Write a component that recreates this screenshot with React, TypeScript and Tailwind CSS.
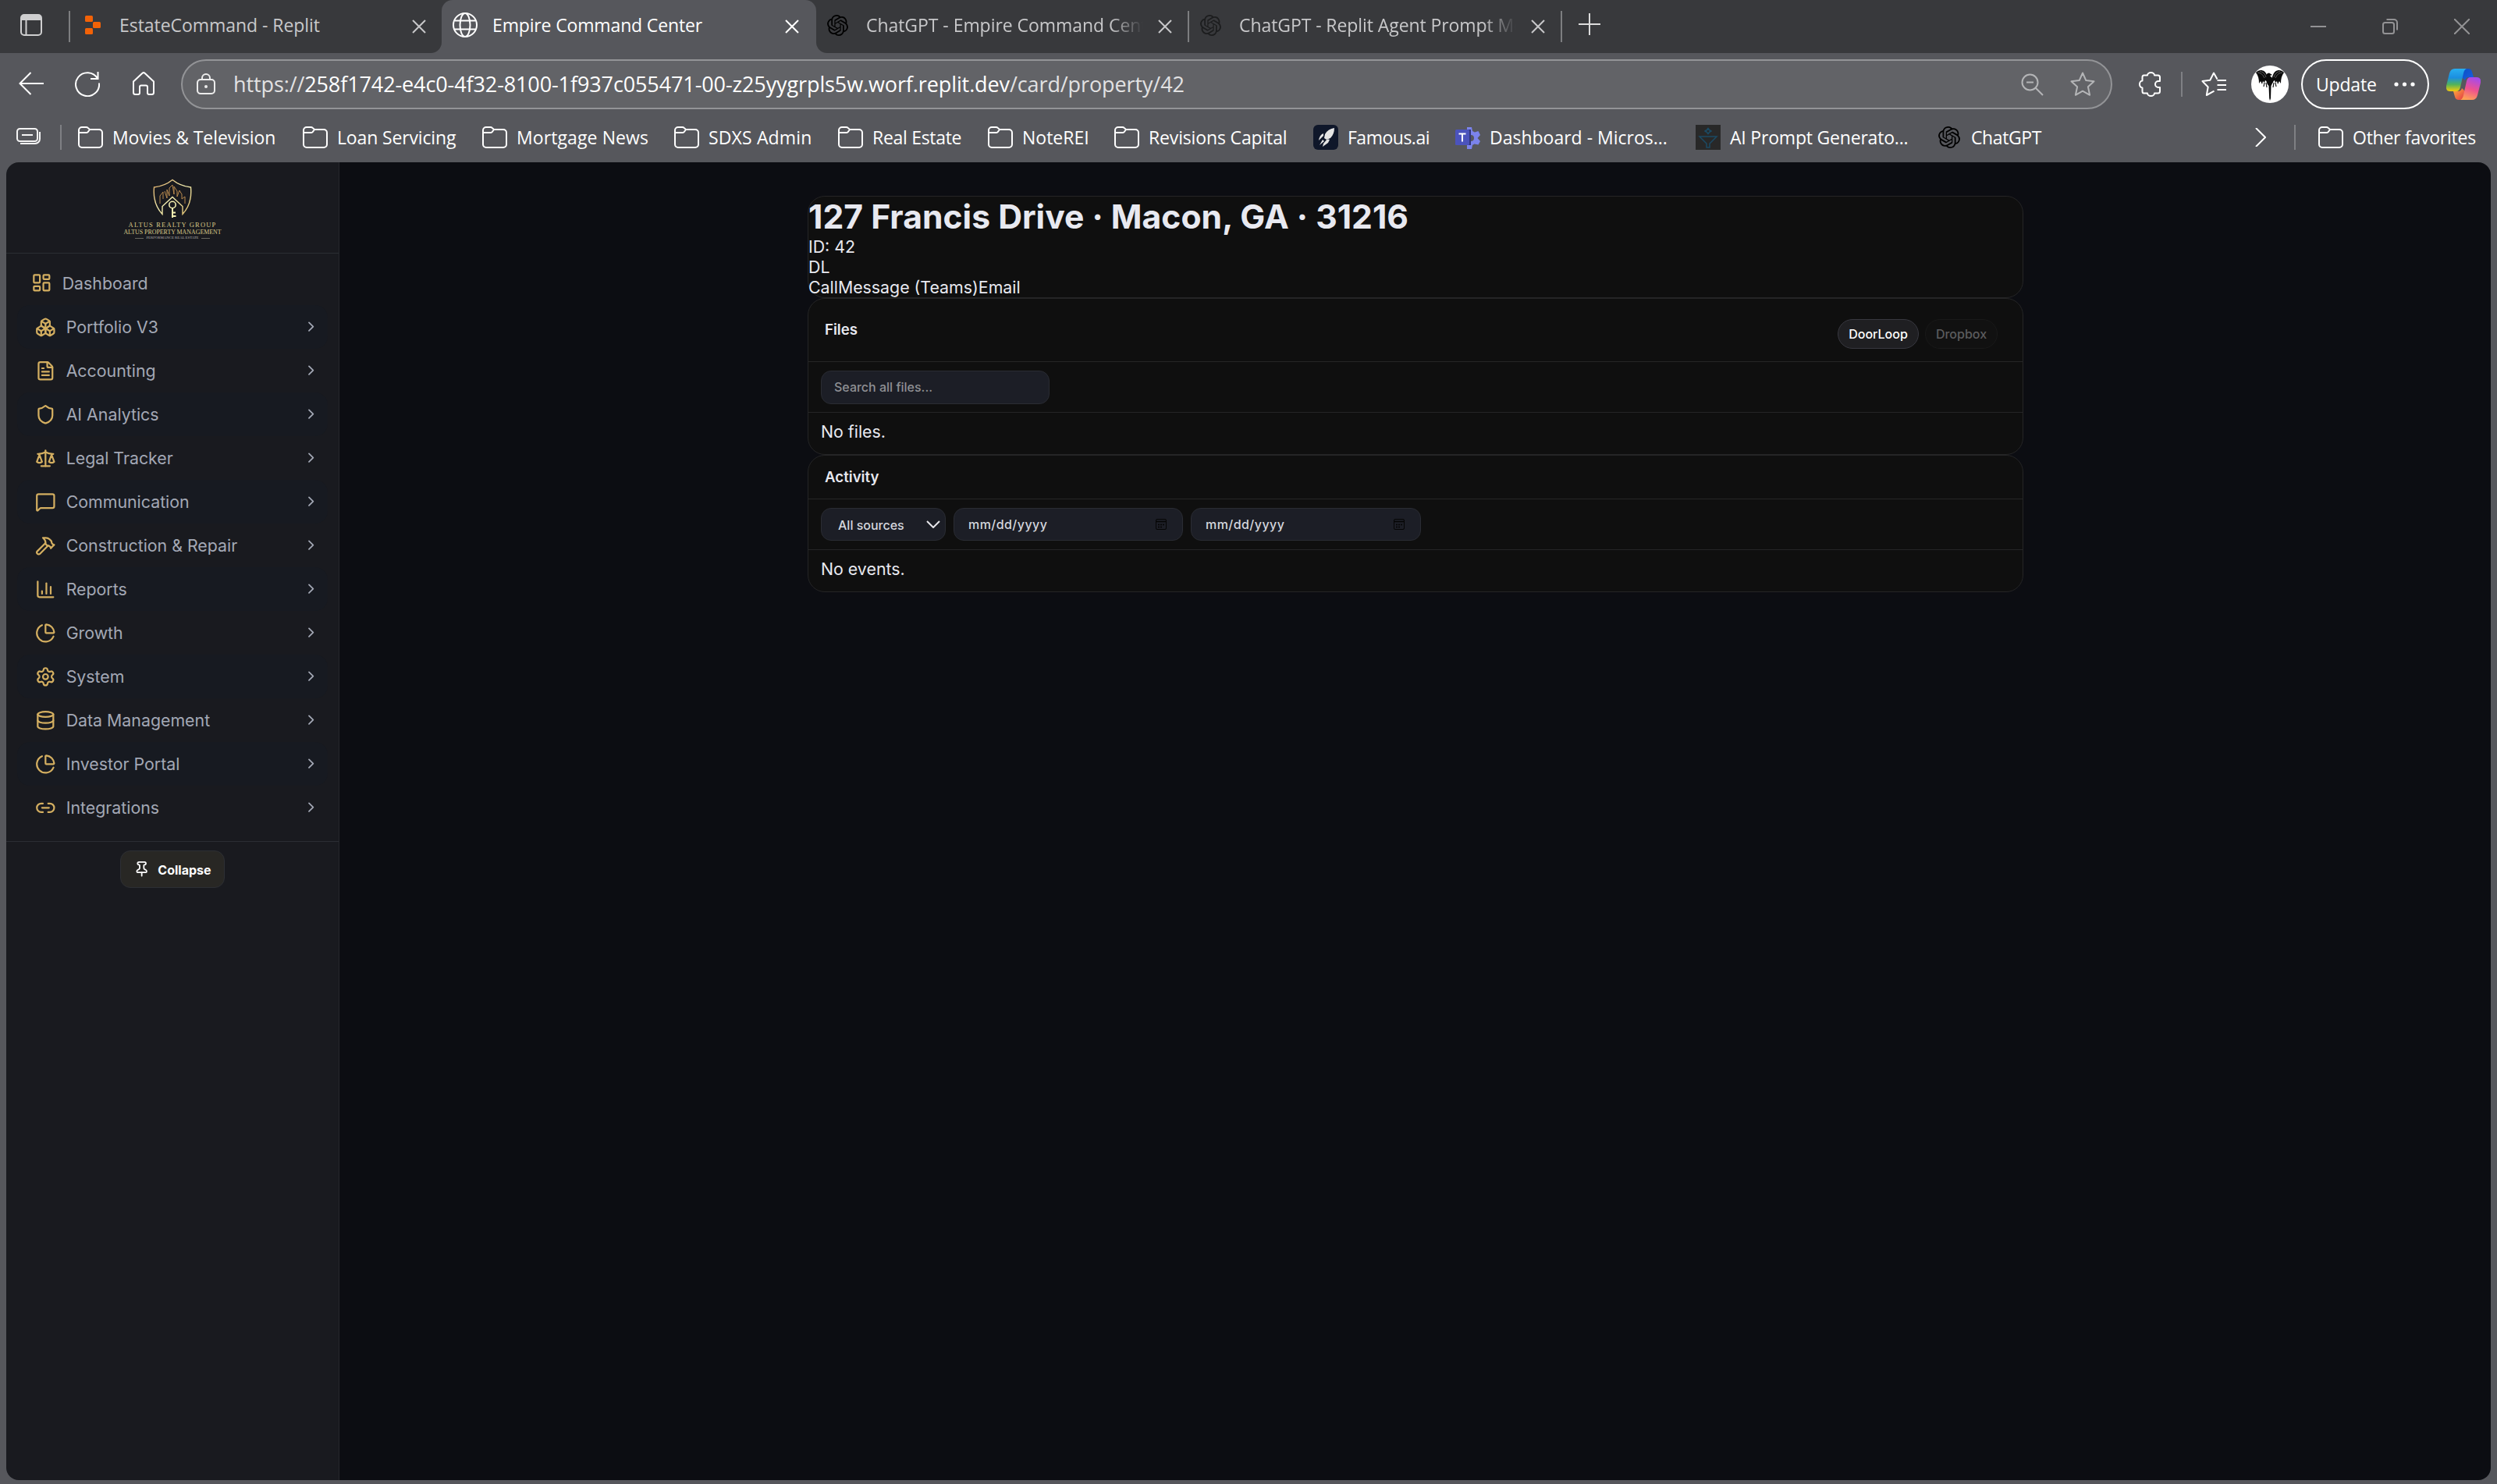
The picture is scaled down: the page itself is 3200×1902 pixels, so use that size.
import type { ReactNode } from "react";
import {
  Boxes,
  ChartColumn,
  ChartPie,
  ChevronRight,
  Database,
  FileText,
  Hammer,
  LayoutDashboard,
  Link2,
  MessageSquare,
  Pin,
  Scale,
  Settings,
  Shield,
} from "lucide-react";

const OPENAI =
  "M22.2819 9.8211a5.9847 5.9847 0 0 0-.5157-4.9108 6.0462 6.0462 0 0 0-6.5098-2.9A6.0651 6.0651 0 0 0 4.9807 4.1818a5.9847 5.9847 0 0 0-3.9977 2.9 6.0462 6.0462 0 0 0 .7427 7.0966 5.98 5.98 0 0 0 .511 4.9107 6.051 6.051 0 0 0 6.5146 2.9001A5.9847 5.9847 0 0 0 13.2599 24a6.0557 6.0557 0 0 0 5.7718-4.2058 5.9894 5.9894 0 0 0 3.9977-2.9001 6.0557 6.0557 0 0 0-.7475-7.0729zm-9.022 12.6081a4.4755 4.4755 0 0 1-2.8764-1.0408l.1419-.0804 4.7783-2.7582a.7948.7948 0 0 0 .3927-.6813v-6.7369l2.02 1.1686a.071.071 0 0 1 .038.052v5.5826a4.504 4.504 0 0 1-4.4945 4.4944zm-9.6607-4.1254a4.4708 4.4708 0 0 1-.5346-3.0137l.142.0852 4.783 2.7582a.7712.7712 0 0 0 .7806 0l5.8428-3.3685v2.3324a.0804.0804 0 0 1-.0332.0615L9.74 19.9502a4.4992 4.4992 0 0 1-6.1408-1.6464zM2.3408 7.8956a4.485 4.485 0 0 1 2.3655-1.9728V11.6a.7664.7664 0 0 0 .3879.6765l5.8144 3.3543-2.0201 1.1685a.0757.0757 0 0 1-.071 0l-4.8303-2.7865A4.504 4.504 0 0 1 2.3408 7.872zm16.5963 3.8558L13.1038 8.364 15.1192 7.2a.0757.0757 0 0 1 .071 0l4.8303 2.7913a4.4944 4.4944 0 0 1-.6765 8.1042v-5.6772a.79.79 0 0 0-.407-.667zm2.0107-3.0231l-.142-.0852-4.7735-2.7818a.7759.7759 0 0 0-.7854 0L9.409 9.2297V6.8974a.0662.0662 0 0 1 .0284-.0615l4.8303-2.7866a4.4992 4.4992 0 0 1 6.6802 4.66zM8.3065 12.863l-2.02-1.1638a.0804.0804 0 0 1-.038-.0567V6.0742a4.4992 4.4992 0 0 1 7.3757-3.4537l-.142.0805L8.704 5.459a.7948.7948 0 0 0-.3927.6813zm1.0976-2.3654l2.602-1.4998 2.6069 1.4998v2.9994l-2.5974 1.4997-2.6067-1.4997Z";

function OpenAiMark({ className }: { className: string }) {
  return (
    <svg viewBox="0 0 24 24" className={className} fill="currentColor">
      <path d={OPENAI} />
    </svg>
  );
}

function FolderIcon() {
  return (
    <svg viewBox="0 0 32 32" className="h-8 w-8 shrink-0" fill="none" stroke="#fff" strokeWidth="2">
      <path d="M1 10V7a4 4 0 0 1 4-4h5.500q1.300 0 2.200.9L15 6h12a4 4 0 0 1 4 4v15a4 4 0 0 1-4 4H5a4 4 0 0 1-4-4V10h9.500q1.300 0 2.200-.9L15 6" />
    </svg>
  );
}

function CloseX() {
  return (
    <svg viewBox="0 0 18 18" className="h-[18px] w-[18px]" fill="none" stroke="currentColor" strokeWidth="2">
      <path d="M1 1l16 16M17 1L1 17" />
    </svg>
  );
}

function TabBar() {
  return (
    <div className="flex h-[68px] bg-[#56575c] text-[#c8c8ca]">
      <div className="flex h-[68px] w-[566px] items-center rounded-br-[14px] bg-[#38393c]">
        <svg viewBox="0 0 28 28" className="-mt-1 ml-[26px] h-7 w-7" fill="none" stroke="#cfcfd0" strokeWidth="2">
          <rect x="1" y="1" width="26" height="26" rx="4" />
          <path d="M1 8V5a4 4 0 0 1 4-4h18a4 4 0 0 1 4 4v3z" fill="#cfcfd0" strokeWidth="0" />
          <path d="M7.500 8v19" />
        </svg>
        <div className="mb-0 ml-[34px] h-10 w-0.5 bg-[#7d7e80]" />
        <svg viewBox="0 0 20 24" className="-mt-1 ml-[19px] h-6 w-5" fill="#f26207">
          <rect x="0" y="0" width="10" height="8" rx="1.500" />
          <rect x="10" y="8" width="10" height="8" rx="1.500" />
          <rect x="0" y="16" width="10" height="8" rx="1.500" />
        </svg>
        <span className="-mt-1 ml-6 w-[375px] text-[23px] tracking-[-0.05px] whitespace-nowrap">
          EstateCommand - Replit
        </span>
        <CloseX />
      </div>
      <div className="w-[480px] bg-[#38393c]">
        <div className="flex h-[68px] items-center rounded-t-[14px] bg-[#56575c] text-white">
          <svg viewBox="0 0 32 32" className="-mt-1 ml-[14px] h-8 w-8" fill="none" stroke="#fff" strokeWidth="2">
            <circle cx="16" cy="16" r="15" />
            <ellipse cx="16" cy="16" rx="6.500" ry="15" />
            <path d="M2.500 10.500h27M2.500 21.500h27" />
          </svg>
          <span className="-mt-1 ml-[19px] w-[375px] text-[23px] tracking-[-0.15px] whitespace-nowrap">
            Empire Command Center
          </span>
          <CloseX />
        </div>
      </div>
      <div className="flex h-[68px] flex-1 items-center rounded-bl-[14px] bg-[#38393c]">
        <OpenAiMark className="-mt-1 ml-[14px] h-[27px] w-[27px] text-black" />
        <span className="-mt-1 mr-[19px] ml-[23px] w-[355px] overflow-hidden text-[23px] tracking-[-0.05px] whitespace-nowrap [mask-image:linear-gradient(to_right,black_88%,transparent)]">
          ChatGPT - Empire Command Center
        </span>
        <CloseX />
        <div className="ml-5 h-10 w-0.5 bg-[#7d7e80]" />
        <OpenAiMark className="-mt-1 ml-[14px] h-[27px] w-[27px] text-[#1c1d1e]" />
        <span className="-mt-1 mr-[19px] ml-[23px] w-[355px] overflow-hidden text-[23px] tracking-[-0.08px] whitespace-nowrap [mask-image:linear-gradient(to_right,black_88%,transparent)]">
          ChatGPT - Replit Agent Prompt Mode
        </span>
        <CloseX />
        <div className="ml-5 h-10 w-0.5 bg-[#7d7e80]" />
        <svg viewBox="0 0 28 28" className="-mt-[6px] ml-[21px] h-7 w-7" fill="none" stroke="#dcdcdc" strokeWidth="2">
          <path d="M14 0v28M0 14h28" />
        </svg>
        <div className="mr-[35px] ml-auto flex gap-[72px] text-[#939395]">
          <svg viewBox="0 0 20 20" className="h-5 w-5" fill="none" stroke="currentColor" strokeWidth="2">
            <path d="M0 10h20" />
          </svg>
          <svg viewBox="0 0 20 20" className="h-5 w-5" fill="none" stroke="currentColor" strokeWidth="2">
            <rect x="1" y="5" width="14" height="14" rx="2.500" />
            <path d="M5.500 1H15a4 4 0 0 1 4 4v9.500" />
          </svg>
          <svg viewBox="0 0 20 20" className="h-5 w-5" fill="none" stroke="currentColor" strokeWidth="2">
            <path d="M0 0l20 20M20 0L0 20" />
          </svg>
        </div>
      </div>
    </div>
  );
}

function Dragon() {
  return (
    <svg viewBox="0 0 48 48" className="ml-8 h-12 w-12 shrink-0">
      <circle cx="24" cy="24" r="24" fill="#fff" />
      <g fill="#0a0a0a">
        <path d="M6 9C10 4 18 5 20 12L22 17 21 21 18 19 17 22 15 20 14 24 12 20 10 23C10 17 9 13 6 9Z" />
        <path d="M42 9C38 4 30 5 28 12L26 17 27 21 30 19 31 22 33 20 34 24 36 20 38 23C38 17 39 13 42 9Z" />
        <path d="M20 15Q18 10 23 9.500L27 12 24 13 26 15Q30 20 27 23L25.500 26 25 42 24 45 23.200 42 22.500 26Q18 22 20 15Z" />
      </g>
      <path
        d="M8 9Q14 9 17 16M11 7.500Q17 8 19 15M40 9Q34 9 31 16M37 7.500Q31 8 29 15"
        stroke="#aaa"
        strokeWidth=".5"
        fill="none"
      />
      <path d="M17 22l-1 5M19 22l1 6M29 22l-1 6M31 22l1 5" stroke="#111" strokeWidth="1.200" />
    </svg>
  );
}

function Copilot() {
  return (
    <svg viewBox="0 0 44 40" className="ml-[22px] h-10 w-11 shrink-0">
      <defs>
        <linearGradient id="cpBlue" x1="0" y1="0" x2="0" y2="1">
          <stop offset="0" stopColor="#28aef0" />
          <stop offset=".4" stopColor="#1b8fe0" />
          <stop offset=".7" stopColor="#52b35a" />
          <stop offset="1" stopColor="#f6cc0b" />
        </linearGradient>
        <linearGradient id="cpPink" x1="0.600" y1="0" x2="0.300" y2="1">
          <stop offset="0" stopColor="#a64bea" />
          <stop offset=".5" stopColor="#ee5190" />
          <stop offset="1" stopColor="#ffa552" />
        </linearGradient>
        <linearGradient id="cpTop" x1="0" y1="0" x2="1" y2="1">
          <stop offset="0" stopColor="#0b4fc4" />
          <stop offset="1" stopColor="#1b5fe0" />
        </linearGradient>
        <linearGradient id="cpBottom" x1="0" y1="0" x2="1" y2="1">
          <stop offset="0" stopColor="#ffb43a" />
          <stop offset="1" stopColor="#e2334a" />
        </linearGradient>
      </defs>
      <path d="M20 0h8q4 0 5 4l2 7h-6q-4 0-5 4l-4-4z" fill="url(#cpTop)" />
      <path d="M24 40h-8q-4 0-5-4l-2-7h6q4 0 5-4l4 4z" fill="url(#cpBottom)" />
      <path d="M11 0h15q-3 1-4 6l-4 18q-1.200 5-5 5H5q-6 0-5-7L4 6Q5.500 0 11 0Z" fill="url(#cpBlue)" />
      <path d="M33 40H18q3-1 4-6l4-18q1.200-5 5-5h8q6 0 5 7l-4 16q-1.500 6-7 6Z" fill="url(#cpPink)" />
    </svg>
  );
}

function AddressBar() {
  return (
    <div className="flex h-[80px] items-center">
      <svg viewBox="0 0 32 30" className="-mt-0.5 ml-6 h-[30px] w-8" fill="none" stroke="#fff" strokeWidth="2">
        <path d="M32 15H1M15.500 1L1.500 15l14 14" />
      </svg>
      <svg viewBox="0 0 32 32" className="ml-10 h-8 w-8" fill="none" stroke="#fff" strokeWidth="2">
        <path d="M31 14.500A15 15 0 1 1 29 8.500M29.500 0v9H20" />
      </svg>
      <svg
        viewBox="0 0 28 30"
        className="-mt-0.5 ml-[42px] h-[30px] w-7"
        fill="none"
        stroke="#fff"
        strokeWidth="2"
        strokeLinejoin="round"
      >
        <path d="M1 12.500L12.500 1.800q1.500-1.300 3 0L27 12.500V26.500q0 2.500-2.500 2.500H21q-2 0-2-2V19.500q0-2-2-2h-6q-2 0-2 2V27q0 2-2 2H3.500Q1 29 1 26.500Z" />
      </svg>
      <div className="ml-[34px] flex h-16 w-[2475px] items-center rounded-full border-2 border-[#939497] bg-[#626367]">
        <svg viewBox="0 0 24 27" className="-mt-0.5 ml-[18px] h-[27px] w-6" fill="none" stroke="#ececec" strokeWidth="2">
          <rect x="1" y="8" width="22" height="18" rx="4" />
          <path d="M7 8V6a5 5 0 0 1 10 0v2" />
          <circle cx="12" cy="17" r="2" fill="#ececec" stroke="none" />
        </svg>
        <span className="ml-[23px] text-[27px] tracking-[-0.11px] whitespace-nowrap text-[#e2e2e3]">
          https://
          <span className="text-white">258f1742-e4c0-4f32-8100-1f937c055471-00-z25yygrpls5w.worf.replit.dev</span>
          /card/property/42
        </span>
        <svg viewBox="0 0 29 29" className="ml-auto h-[29px] w-[29px]" fill="none" stroke="#b4b5b7" strokeWidth="2">
          <circle cx="11.500" cy="11.500" r="10" />
          <path d="M7 11.500h9M18.500 18.500L28 28" />
        </svg>
        <svg
          viewBox="0 0 32 32"
          className="mr-[20px] ml-[34px] h-8 w-8"
          fill="none"
          stroke="#b4b5b7"
          strokeWidth="2"
          strokeLinejoin="round"
        >
          <path d="M16 1.500l4.300 9.600 10.200 1.100-7.600 7 2.200 10.600L16 24.700l-9.100 5.100 2.200-10.600-7.600-7 10.200-1.100z" />
        </svg>
      </div>
      <svg
        viewBox="0 0 28 32"
        className="ml-[34px] h-8 w-7 shrink-0"
        fill="none"
        stroke="#fff"
        strokeWidth="2"
        strokeLinejoin="round"
      >
        <path d="M6.500 4.500H11a4.500 3.500 0 0 1 9 0h4.500q2.500 0 2.500 2.500v5h-2a4 4 0 0 0 0 8h2v5q0 2.500-2.500 2.500H20a4.500 3.500 0 0 1-9 0H6.500q-2 0-2-2.500v-4.500a3.500 4.500 0 0 1 0-9V7q0-2.500 2-2.500z" />
      </svg>
      <div className="ml-[26px] h-8 w-0.5 bg-[#7f8084]" />
      <svg
        viewBox="0 0 32 32"
        className="ml-6 h-8 w-8 shrink-0"
        fill="none"
        stroke="#fff"
        strokeWidth="2"
        strokeLinejoin="round"
      >
        <path d="M20.500 9.500L16 1.500l-4.700 9.300-9.800 1.300 7.200 7.400L6.800 30l9.700-5.300M20.500 11H32M20.500 17H32M20.500 23H32" />
      </svg>
      <Dragon />
      <div className="ml-4 flex h-16 w-[164px] shrink-0 items-center rounded-full border-2 border-white text-white">
        <span className="ml-[17px] w-[100px] text-[23px] tracking-[-0.2px]">Update</span>
        <svg viewBox="0 0 28 6" className="h-1.5 w-7" fill="#fff">
          <circle cx="3" cy="3" r="2.600" />
          <circle cx="13.500" cy="3" r="2.600" />
          <circle cx="24" cy="3" r="2.600" />
        </svg>
      </div>
      <Copilot />
    </div>
  );
}

function Bookmark({ className, icon, children }: { className: string; icon?: ReactNode; children: string }) {
  return (
    <div className={`flex shrink-0 items-center gap-3 ${className}`}>
      {icon ?? <FolderIcon />}
      <span className="text-[23px] whitespace-nowrap">{children}</span>
    </div>
  );
}

function FavoritesBar() {
  return (
    <div className="flex h-[60px] items-center pb-1 text-white">
      <svg viewBox="0 0 32 22" className="-mt-0.5 ml-[21px] h-[22px] w-8" fill="none" stroke="#f4f4f4" strokeWidth="2">
        <rect x="1" y="1" width="26" height="16" rx="3.500" />
        <path d="M7 9h14M30 5v9a6 6 0 0 1-6 6H5" />
      </svg>
      <div className="mr-[21px] ml-6 h-8 w-0.5 bg-[#7f8084]" />
      <Bookmark className="w-[288px] tracking-[-0.07px]">Movies &amp; Television</Bookmark>
      <Bookmark className="w-[230px] tracking-[-0.15px]">Loan Servicing</Bookmark>
      <Bookmark className="w-[246px] tracking-[0.1px]">Mortgage News</Bookmark>
      <Bookmark className="w-[210px] tracking-[0.15px]">SDXS Admin</Bookmark>
      <Bookmark className="w-[192px] tracking-[-0.3px]">Real Estate</Bookmark>
      <Bookmark className="w-[162px]">NoteREI</Bookmark>
      <Bookmark className="w-[255px] tracking-[-0.15px]">Revisions Capital</Bookmark>
      <Bookmark
        className="w-[182px] tracking-[-0.5px]"
        icon={
          <svg viewBox="0 0 32 32" className="h-8 w-8 shrink-0">
            <rect width="32" height="32" rx="6" fill="#0f172a" />
            <path
              d="M27 4Q19 5 15 12L14 17l3 2 5-2Q27 12 27 4ZM13 11q-5 2-6 9l6-6zM12 19l-4 7 6-5zM21 19l-2 4-7 5 1-4 5-6z"
              fill="#e5e5e5"
            />
          </svg>
        }
      >
        Famous.ai
      </Bookmark>
      <Bookmark
        className="w-[308px]"
        icon={
          <svg viewBox="0 0 32 32" className="h-8 w-8 shrink-0">
            <path
              d="M15 3h6l1 5 3 1.500 4.500-1.500 2.500 5-3.500 4 3.500 4-2.500 4.500-5-1L22 26l-1 5h-6z"
              fill="#7b83eb"
            />
            <circle cx="20" cy="17" r="4" fill="#56575c" />
            <rect x="15" y="6" width="5" height="20" fill="#32367a" />
            <rect x="0" y="6" width="18" height="20" rx="1.500" fill="#4b53bc" />
            <path d="M4.500 11.500h9M9 11.500v10" stroke="#fff" strokeWidth="2" />
          </svg>
        }
      >
        Dashboard - Micros...
      </Bookmark>
      <Bookmark
        className="w-[309px] tracking-[-0.2px]"
        icon={
          <svg viewBox="0 0 32 32" className="h-8 w-8 shrink-0" fill="none" stroke="#1b4a63" strokeWidth="1.500">
            <rect width="32" height="32" fill="#282828" stroke="none" />
            <path d="M5 15h22l-9 9v5h-4v-5zM16 4q.8 3.200 4.500 4-3.700.8-4.500 4-.8-3.200-4.500-4 3.700-.8 4.500-4z" />
          </svg>
        }
      >
        AI Prompt Generato...
      </Bookmark>
      <Bookmark
        className="w-[140px] tracking-[-0.4px]"
        icon={<OpenAiMark className="mx-[2px] h-7 w-7 shrink-0 text-black" />}
      >
        ChatGPT
      </Bookmark>
      <svg viewBox="0 0 14 24" className="ml-auto h-6 w-3.5 shrink-0" fill="none" stroke="#fff" strokeWidth="2">
        <path d="M1 0l12 12L1 24" />
      </svg>
      <div className="mr-[29px] ml-9 h-8 w-0.5 bg-[#7f8084]" />
      <Bookmark className="w-[229px] tracking-[-0.25px]">Other favorites</Bookmark>
    </div>
  );
}

const NAV = [
  { label: "Portfolio V3", Icon: Boxes },
  { label: "Accounting", Icon: FileText },
  { label: "AI Analytics", Icon: Shield },
  { label: "Legal Tracker", Icon: Scale },
  { label: "Communication", Icon: MessageSquare },
  { label: "Construction & Repair", Icon: Hammer },
  { label: "Reports", Icon: ChartColumn },
  { label: "Growth", Icon: ChartPie },
  { label: "System", Icon: Settings },
  { label: "Data Management", Icon: Database },
  { label: "Investor Portal", Icon: ChartPie },
  { label: "Integrations", Icon: Link2 },
];

function Logo() {
  return (
    <div className="flex h-[117px] flex-col items-center border-b border-[#2b2d33] pt-[21px] font-['Liberation_Serif',serif]">
      <svg viewBox="0 0 50 52" className="h-[52px] w-[50px]" fill="none">
        <defs>
          <linearGradient id="gold" x1="0" y1="0" x2="1" y2="1">
            <stop offset="0" stopColor="#d9a560" />
            <stop offset=".5" stopColor="#f3eeb0" />
            <stop offset="1" stopColor="#d9b868" />
          </linearGradient>
        </defs>
        <path
          d="M25 1.500Q15 9.500 1.500 11Q-.5 32 12 45.500V35.500L25 23.500L38 35.500V45.500Q50.500 32 48.500 11Q35 9.500 25 1.500Z"
          stroke="url(#gold)"
          strokeWidth="1.400"
        />
        <path
          d="M9 32V22l4-5v9M15 16l3 9V14l3 8V12l4-4 2 12V10l4 6v7l3-8 3 5v6l4-3v9"
          stroke="#b98a4e"
          strokeWidth="1"
        />
        <circle cx="25" cy="33.500" r="4.200" stroke="#f3eeb0" strokeWidth="1.600" />
        <path d="M25 37.500V50M26 43.500h3M26 48h3.500" stroke="#f3eeb0" strokeWidth="2" />
      </svg>
      <span className="mt-[2px] text-[8.500px] leading-[10px] tracking-[1.150px] whitespace-nowrap text-[#d8c887]">
        ALTUS REALTY GROUP
      </span>
      <span className="text-[7.900px] leading-[9px] whitespace-nowrap text-[#d8c887]">ALTUS PROPERTY MANAGEMENT</span>
      <div className="flex items-center gap-[3px] text-[#b5b5b0]">
        <div className="h-px w-[11px] bg-[#66665f]" />
        <span className="text-[4.800px] leading-[6px] whitespace-nowrap">PERFORMANCE REAL ESTATE</span>
        <div className="h-px w-[11px] bg-[#66665f]" />
      </div>
    </div>
  );
}

function Sidebar() {
  return (
    <aside className="flex w-[427px] shrink-0 flex-col border-r border-[#26282d] bg-[#191a1f] text-[21.330px] text-[#a3a8b5]">
      <Logo />
      <nav className="flex h-[754px] flex-col border-b border-[#2b2d33] px-[14px] pt-[9px]">
        <div className="flex h-[57px] items-center pl-[18px]">
          <LayoutDashboard size={26.67} strokeWidth={2} className="text-[#d4af61]" />
          <span className="ml-[13px] pt-0.5">Dashboard</span>
        </div>
        {NAV.map(({ label, Icon }, i) => (
          <div
            key={label}
            className={`flex h-14 items-center rounded-[16px] pl-[23px] ${i % 2 === 0 ? "bg-[#171a21]" : ""}`}
          >
            <Icon size={26.67} strokeWidth={2} className="text-[#d4af61]" />
            <span className="ml-[13px] pt-px whitespace-nowrap">{label}</span>
            <ChevronRight size={21.33} strokeWidth={2} className="mr-[10.600px] ml-auto" />
          </div>
        ))}
      </nav>
      <div className="flex justify-center pt-[11px]">
        <button className="flex h-12 w-[134px] items-center rounded-[13px] border border-[#2d2f34] bg-[#282724] pl-[16px] text-[16px] font-bold text-white">
          <Pin size={21.33} strokeWidth={2} className="mr-[10px]" />
          <span className="pt-px">Collapse</span>
        </button>
      </div>
    </aside>
  );
}

function CalendarIcon() {
  return (
    <svg viewBox="0 0 14 14" className="mr-[20px] ml-auto h-3.5 w-3.5" fill="none" stroke="#050505">
      <rect x=".5" y=".5" width="13" height="13" rx="1.500" />
      <path d="M0 3.500h14M3 7.500h2M6 7.500h2M9 7.500h2M3 10.500h2M6 10.500h2" strokeWidth="1.500" />
    </svg>
  );
}

function DateField({ className }: { className: string }) {
  return (
    <div
      className={`flex h-[42px] items-center rounded-[13px] border border-[#2a2c33] bg-[#1c1e26] pl-[18px] ${className}`}
    >
      <span className="text-[16px] font-medium tracking-[0.45px] text-[#d5d7de]">mm/dd/yyyy</span>
      <CalendarIcon />
    </div>
  );
}

function PropertyCard() {
  return (
    <main className="flex-1 bg-[#0c0d12] pt-[43px] text-[21.330px] text-[#e8e9f0]">
      <div className="ml-[600px] w-[1558px]">
        <section className="h-[131px] rounded-[22px] border border-[#252526] bg-[#0f0f0f] leading-[26px]">
          <h1 className="text-[42.670px] leading-[51px] font-bold">127 Francis Drive · Macon, GA · 31216</h1>
          <div>ID: 42</div>
          <div>DL</div>
          <div>CallMessage (Teams)Email</div>
        </section>
        <section className="h-[201px] rounded-[22px] border border-[#252526] bg-[#0f0f0f]">
          <div className="flex h-[81px] border-b border-[#252526] pl-[21px]">
            <h2 className="mt-[26px] text-[18.670px] leading-[28px] font-semibold">Files</h2>
            <div className="mt-[26px] mr-[32px] ml-auto flex gap-2 text-[16px] font-medium">
              <span className="flex h-[38px] w-[104px] items-center justify-center rounded-full border border-[#383840] bg-[#1f1f22] text-white">
                DoorLoop
              </span>
              <span className="flex h-[38px] w-[93px] items-center justify-center rounded-full border border-[#191919] bg-[#111111] text-[#5c5c5e]">
                Dropbox
              </span>
            </div>
          </div>
          <div className="flex h-[65px] items-center border-b border-[#252526] pl-4">
            <div className="flex h-[43px] w-[293px] items-center rounded-[13px] border border-[#2a2c33] bg-[#1c1e26] pl-4 text-[16px] font-medium text-[#8f9094]">
              Search all files...
            </div>
          </div>
          <div className="pt-[9px] pl-4">No files.</div>
        </section>
        <section className="h-[176px] rounded-[22px] border border-[#252526] bg-[#0f0f0f]">
          <h2 className="flex h-[56px] items-center border-b border-[#252526] pl-[21px] text-[18.670px] font-semibold">
            Activity
          </h2>
          <div className="flex h-[65px] items-center border-b border-[#252526] pl-4">
            <div className="flex h-[42px] w-[160px] items-center rounded-[13px] border border-[#2a2c33] bg-[#1c1e26] pl-[21px] text-[16px] font-medium text-[#d5d7de]">
              <span className="pt-px">All sources</span>
              <svg
                viewBox="0 0 18 10"
                className="mr-[6px] ml-auto h-2.5 w-[18px]"
                fill="none"
                stroke="#e6e6ea"
                strokeWidth="2"
              >
                <path d="M1 1l8 8 8-8" />
              </svg>
            </div>
            <DateField className="ml-[10px] w-[294px]" />
            <DateField className="ml-[10px] w-[295px]" />
          </div>
          <div className="pt-[9px] pl-4">No events.</div>
        </section>
      </div>
    </main>
  );
}

export default function App() {
  return (
    <div className="flex h-[1902px] w-[3200px] flex-col bg-[#56575c] font-['Open_Sans',sans-serif]">
      <TabBar />
      <AddressBar />
      <FavoritesBar />
      <div className="mx-2 flex h-[1689px] overflow-hidden rounded-[16px] font-['Inter',sans-serif]">
        <Sidebar />
        <PropertyCard />
      </div>
    </div>
  );
}
